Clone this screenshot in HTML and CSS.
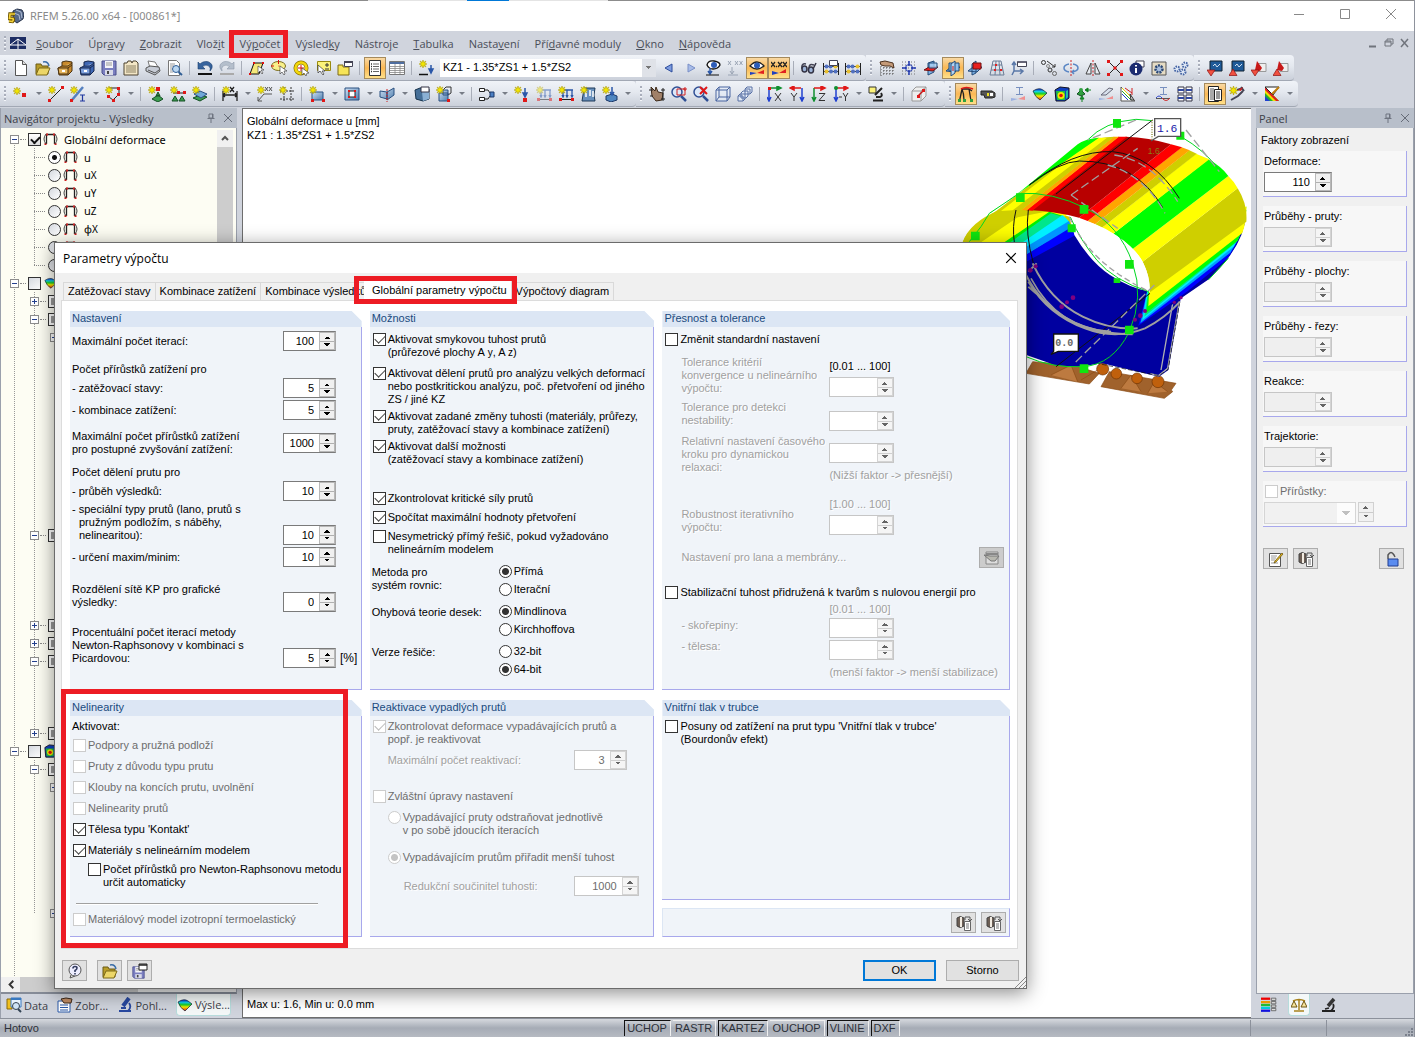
FILE: index.html
```html
<!DOCTYPE html>
<html lang="cs">

<head>
    <meta charset="UTF-8">
    <meta name="viewport" content="width=device-width, initial-scale=1.0">
    <title>RFEM 5.26.00 x64 - [000861*]</title>
    <link rel="stylesheet" href="styles.css">
</head>

<body>

    <!-- Icons -->
    <svg class="sprite" width="0" height="0">
        <defs>
            <linearGradient id="rainbow" x1="0" x2="0" y1="0" y2="1">
                <stop offset="0" stop-color="#1020d0"/><stop offset=".25" stop-color="#10d0e0"/><stop offset=".45" stop-color="#20d020"/><stop offset=".65" stop-color="#f5f000"/><stop offset="1" stop-color="#f01010"/>
            </linearGradient>
            <linearGradient id="blueface" x1="0" x2="1" y1="0" y2="1">
                <stop offset="0" stop-color="#cfe0f4"/><stop offset="1" stop-color="#4f7fae"/>
            </linearGradient>
        </defs>
        <symbol id="star" viewBox="0 0 8 8"><path d="M4 0l.8 2.3L7 1 5.700 3.200 8 4l-2.300.8L7 7 4.800 5.700 4 8l-.8-2.300L1 7l1.300-2.200L0 4l2.300-.8L1 1l2.200 1.300z" fill="#f2e600" stroke="#a89400" stroke-width=".5"/></symbol>
        <symbol id="i-app" viewBox="0 0 16 16"><path d="M5 3l4-2 5 1 2 4-1 5-6 4-4-3z" fill="#55688a" stroke="#26324a"/><path d="M8 2l5 2 1 6M6 5l5 2 1 5" stroke="#aebbd3" fill="none"/><path d="M7 6H2L1.500 10.500H5Q6 12 4.500 13.500L1 13" fill="none" stroke="#6b5200" stroke-width="3.500"/><path d="M7 6H2L1.500 10.500H5Q6 12 4.500 13.500L1 13" fill="none" stroke="#f5d33a" stroke-width="1.700"/></symbol>
        <symbol id="i-bridge" viewBox="0 0 16 12"><path fill="#1d2d63" d="M0 0h16v12H0z"/><path d="M0 8h16M8 2v10M0 8l8-6 8 6" stroke="#fff" fill="none"/></symbol>
        <symbol id="i-new" viewBox="0 0 16 16"><path d="M2.500.5h7l4 4v11h-11z" fill="#fff" stroke="#555"/><path d="M9.500.5v4h4" fill="#ddd" stroke="#555"/></symbol>
        <symbol id="i-open" viewBox="0 0 16 16"><path d="M1 4h5l1 2h6v8H1z" fill="#b89c28" stroke="#6b5a14"/><path d="M4 8h11l-3 7H1z" fill="#ecd668" stroke="#7d6a18"/><path d="M8 2q5-1 6 4" stroke="#3a6ea8" stroke-width="1.500" fill="none"/></symbol>
        <symbol id="i-chest" viewBox="0 0 16 16"><path d="M1 8l4-2V2l4-1 6 1v9l-4 4H2z" fill="#c98a2c" stroke="#4a3210"/><path d="M1 8h10v6H2zM11 8l4-3M5 6h6l4-3" fill="#e5b45c" stroke="#4a3210"/><path d="M5 10h3v2H5z" fill="#fff"/></symbol>
        <symbol id="i-chestb" viewBox="0 0 16 16"><path d="M1 8l4-2V2l4-1 6 1v9l-4 4H2z" fill="#3f67b4" stroke="#16264c"/><path d="M1 8h10v6H2zM11 8l4-3M5 6h6l4-3" fill="#7fa2de" stroke="#16264c"/><path d="M5 10h3v2H5z" fill="#fff"/></symbol>
        <symbol id="i-save" viewBox="0 0 16 16"><path d="M1 1h14v14H3l-2-2z" fill="#7b7fc0" stroke="#4a4e8c"/><path d="M4 1h8v7H4z" fill="#f4f4f8"/><path d="M5 3h6M5 5h6" stroke="#999"/><path d="M4 10h8v5H4z" fill="#d8dae8"/><path d="M6 11h2v3H6z" fill="#444"/></symbol>
        <symbol id="i-box" viewBox="0 0 16 16"><path d="M1 3h3l1-2h3l1 2 1-2h3l2 2v12H1z" fill="#f3e6c6" stroke="#4c4230"/><path d="M3 6h10M3 8h10M3 10h10M3 12h10" stroke="#8b8062"/></symbol>
        <symbol id="i-print" viewBox="0 0 16 16"><path d="M3 1l7 1 3 5-8 1z" fill="#fff" stroke="#777"/><path d="M1 8l4-2 9 1 1 4-5 4-9-4z" fill="#c7ccd6" stroke="#555"/><path d="M3 10l7 3 4-3" stroke="#555" fill="none"/></symbol>
        <symbol id="i-preview" viewBox="0 0 16 16"><path d="M1.500.5h8l3 3v12h-11z" fill="#fff" stroke="#777"/><path d="M3 4h5M3 6h4M3 8h2M3 10h2M3 12h3" stroke="#999"/><circle cx="9" cy="9" r="3.500" fill="#bcd8f2" stroke="#2f5d94"/><path d="M11.500 12l3.500 3" stroke="#2f5d94" stroke-width="2"/></symbol>
        <symbol id="i-undo" viewBox="0 0 16 16"><path d="M1 2v7h7L5.500 6.500Q9 4 12 6q2 2 1 5 3-3 2-6Q12 0 6 2 4 3 3 4z" fill="#37649e" stroke="#1b3f70" stroke-width=".6"/><path d="M1 14h14" stroke="#111" stroke-width="2"/></symbol>
        <symbol id="i-redo" viewBox="0 0 16 16"><path d="M15 2v7H8l2.500-2.500Q7 4 4 6 2 8 3 11 0 8 1 5q3-5 9-3 2 1 3 2z" fill="#b5bfcc" stroke="#8d99aa" stroke-width=".6"/><path d="M1 14h14" stroke="#aaa" stroke-width="2"/></symbol>
        <symbol id="i-poly" viewBox="0 0 16 16"><path d="M5 3h9l-4 11H1z" fill="#f5e87a" stroke="#111"/><path d="M4 2h2v2H4zM13 2h2v2h-2zM0 13h2v2H0z" fill="#e01010"/><path d="M9 6v7l2-2 2 3 1-1-2-3h3z" fill="#fff" stroke="#333" stroke-width=".6"/></symbol>
        <symbol id="i-lasso" viewBox="0 0 16 16"><ellipse cx="7.500" cy="6" rx="7" ry="4.500" fill="#f8f08a" stroke="#7b6c20"/><path d="M7.500 0v4M0 6h3M7.500 6h1" stroke="#e01010"/><path d="M9 6v8l2-2 2 3 1-1-1-3h3z" fill="#fff" stroke="#333" stroke-width=".6"/></symbol>
        <symbol id="i-ring" viewBox="0 0 16 16"><circle cx="8" cy="8" r="5.500" fill="#fff" stroke="#8b7400" stroke-width="4"/><circle cx="8" cy="8" r="5.500" fill="none" stroke="#f4d80c" stroke-width="2.600"/><path d="M5 8h6M8 5v6" stroke="#e01010"/><path d="M9 8v7l2-2 2 3 1-3h2z" fill="#fff" stroke="#333" stroke-width=".6"/></symbol>
        <symbol id="i-rectsel" viewBox="0 0 16 16"><path d="M2.500 1.500h13v9h-13z" fill="#fbf27a" stroke="#998a10"/><path d="M10 5h4M12 3v4M10 9h4" stroke="#333"/><path d="M3 5v8l2-2 3 4 1-1-2-3h3z" fill="#fff" stroke="#333" stroke-width=".7"/></symbol>
        <symbol id="i-foldwin" viewBox="0 0 16 16"><path d="M1 5h5v2h6v8H1z" fill="#f6e458" stroke="#7d6a18"/><path d="M7.500 1.500h8v5h-8z" fill="#fff" stroke="#445"/><path d="M7 2h9" stroke="#445" stroke-width="2"/></symbol>
        <symbol id="i-list" viewBox="0 0 16 16"><path d="M2.500.5h11v15h-11z" fill="#fff" stroke="#333"/><path d="M4 4h1M4 6.500h1M4 9h1M4 11.500h1" stroke="#333" stroke-width="1.500"/><path d="M6 4h6M6 6.500h6M6 9h6M6 11.500h6" stroke="#666"/></symbol>
        <symbol id="i-table" viewBox="0 0 16 16"><path d="M.5 1.500h15v13H.5z" fill="#fff" stroke="#777"/><path d="M1 3h14" stroke="#4f6ea0" stroke-width="2"/><path d="M1 6.500h14M1 8.500h14M1 10.500h14M1 12.500h14M6 4v10M11 4v10" stroke="#888" stroke-width=".8"/></symbol>
        <symbol id="i-load" viewBox="0 0 16 16"><use href="#star" width="8" height="8"/><path d="M12 5v7M10 9l2 4 2-4z" stroke="#2a57a8" stroke-width="1.500" fill="#2a57a8"/><path d="M0 14.500h9" stroke="#111" stroke-width="1.500"/></symbol>
        <symbol id="i-left" viewBox="0 0 16 16"><path d="M11 4v8L4 8z" fill="#7d9ce0" stroke="#2c4c9c"/></symbol>
        <symbol id="i-right" viewBox="0 0 16 16"><path d="M5 4v8l7-4z" fill="#a8bce8" stroke="#7a90c8"/></symbol>
        <symbol id="i-eyeload" viewBox="0 0 16 16"><path d="M2 5q1-5 7-4 6 1 6 4-2 4-7 4-4 0-6-4z" fill="#fff" stroke="#111" stroke-width="1.300"/><circle cx="9" cy="5" r="3" fill="#2c5cb8"/><path d="M5 8v6M3 11l2 3 2-3" stroke="#2a57a8" stroke-width="1.500" fill="none"/><path d="M1 15h13" stroke="#111"/></symbol>
        <symbol id="i-xxx" viewBox="0 0 16 16"><path d="M1 1l3 4M4 1L1 5M8 1l3 4M11 1L8 5M12.500 1l3 4M15.500 1l-3 4M5 7v7M3 11l2 3 2-3M1 15h10" stroke="#9aa4b4" fill="none"/></symbol>
        <symbol id="i-eye" viewBox="0 0 16 16"><path d="M1 6q7-8 14 0-7 6-14 0z" fill="#fff" stroke="#222" stroke-width="1.300"/><circle cx="8" cy="5.500" r="3" fill="#2c5cb8"/><path d="M1 15v-3l7 1z" fill="#2040c0"/><path d="M8 13l7-3v4z" fill="#e02020"/></symbol>
        <symbol id="i-xval" viewBox="0 0 16 16"><path d="M0 2l4 5M4 2L0 7M7 2l4 5M11 2L7 7M12 2l4 5M16 2l-4 5M5 6.500h1" stroke="#222" stroke-width="1.300"/><path d="M1 15v-4l7 2z" fill="#2040c0"/><path d="M8 13l7-4v4z" fill="#e02020"/></symbol>
        <symbol id="i-glasses" viewBox="0 0 16 16"><path d="M1 9q-1-6 4-5M8 8q0-5 5-3" fill="none" stroke="#445" stroke-width="1.500"/><ellipse cx="3.500" cy="9" rx="2.500" ry="3" fill="#9db4d8" stroke="#334" stroke-width="1.500"/><ellipse cx="10" cy="10" rx="2.500" ry="3" fill="#9db4d8" stroke="#334" stroke-width="1.500"/><path d="M12 9l3-6" stroke="#334" stroke-width="1.500"/></symbol>
        <symbol id="i-abacus" viewBox="0 0 16 16"><path d="M.5 3v12M15.500 3v12M1 6.500h14M1 11.500h14" stroke="#222"/><circle cx="3.500" cy="6.500" r="2" fill="#5070c0"/><circle cx="7.500" cy="6.500" r="2" fill="#5070c0"/><circle cx="12.500" cy="6.500" r="2" fill="#e8c030"/><circle cx="3.500" cy="11.500" r="2" fill="#e8c030"/><circle cx="8" cy="11.500" r="2" fill="#5070c0"/><circle cx="12.500" cy="11.500" r="2" fill="#5070c0"/></symbol>
        <symbol id="i-abacuswin" viewBox="0 0 16 16"><use href="#i-abacus" width="16" height="16"/><path d="M6.500.5h8v5h-8z" fill="#fff" stroke="#445"/></symbol>
        <symbol id="i-handgrid" viewBox="0 0 16 16"><path d="M1 8h14M1 11h14M1 14h14M2 3v13M5 7v9M8 7v9M11 7v9M14 7v9" stroke="#555" stroke-dasharray="1 2"/><path d="M1 2l5-1 8 2 1 5-4-2H6L2 5z" fill="#c49a78" stroke="#4c3220"/></symbol>
        <symbol id="i-snap" viewBox="0 0 16 16"><path d="M1 2h14M1 5h14M1 8h14M1 11h14M1 14h14" stroke="#777" stroke-dasharray="1 2"/><circle cx="8" cy="8" r="3.500" fill="none" stroke="#2038b0"/><path d="M8 1v5M8 10v5M1 8h5M10 8h5" stroke="#2038b0" stroke-width="1.500"/></symbol>
        <symbol id="i-planexy" viewBox="0 0 16 16"><path d="M5 3l6-2v11l-6 3z" fill="#7fb4e8" stroke="#234a78"/><path d="M1 10l5-3h9l-5 4z" fill="#e82020" stroke="#701010"/><path d="M6 3h8v5H6z" fill="#a8d0f4" fill-opacity=".8" stroke="#234a78"/></symbol>
        <symbol id="i-planeyz" viewBox="0 0 16 16"><path d="M1 11l5-4h9l-5 5z" fill="#7fb4e8" stroke="#234a78"/><path d="M4 3h10v8H4z" fill="#8fc0ee" stroke="#234a78"/><path d="M6 4l4-3v12l-4 3z" fill="#b0d4f4" stroke="#234a78"/><path d="M8 6v5" stroke="#d01818"/></symbol>
        <symbol id="i-planexz" viewBox="0 0 16 16"><path d="M1 11l5-4h9l-5 5zM5 4l4-3v12l-4 2z" fill="#7fb4e8" stroke="#234a78"/><path d="M6 3h8v6H6z" fill="#e82020" stroke="#701010"/></symbol>
        <symbol id="i-mesh" viewBox="0 0 16 16"><path d="M4 1h8l3 14H1zM3 5h10M2 10h12M7 1L6 15M10 1l1 14" fill="none" stroke="#6a7c96"/><path d="M6 4h2v2H6zM11 9h2v2h-2zM5 9h2v2H5z" fill="#e02020"/></symbol>
        <symbol id="i-coordwin" viewBox="0 0 16 16"><path d="M3 3v8h8M3 11l-2 4M1 5l2-3 2 3M9 9l3 2-3 3" fill="none" stroke="#5a78a8" stroke-width="1.500"/><path d="M6.500 1.500h9v5h-9z" fill="#fff" stroke="#445"/><path d="M7 2h8" stroke="#667" stroke-width="2"/></symbol>
        <symbol id="i-move" viewBox="0 0 16 16"><circle cx="2.500" cy="2.500" r="2" fill="none" stroke="#333"/><circle cx="7" cy="6" r="1.500" fill="none" stroke="#888"/><circle cx="9" cy="10" r="2" fill="none" stroke="#333"/><circle cx="13.500" cy="13.500" r="2" fill="none" stroke="#666"/><path d="M6 1l8 6M11 7h3V4" stroke="#333" fill="none"/></symbol>
        <symbol id="i-rotate" viewBox="0 0 16 16"><path d="M6 4Q1 5 1 8t5 4M10 4q5 1 5 4t-6 4M11 10l-2 2 2 2" fill="none" stroke="#5a86c4" stroke-width="1.500"/><path d="M8 0v16" stroke="#d02020" stroke-dasharray="2 1.500"/></symbol>
        <symbol id="i-mirror" viewBox="0 0 16 16"><path d="M6 3v11H1zM10 3v11h5z" fill="#e8ecf2" stroke="#444"/><path d="M8 0v16" stroke="#d02020" stroke-dasharray="2 1.500"/></symbol>
        <symbol id="i-cross" viewBox="0 0 16 16"><path d="M2 2l12 12M14 2L2 14" stroke="#222"/><path d="M0 0h3v3H0zM13 0h3v3h-3zM0 13h3v3H0zM13 13h3v3h-3zM6.500 6.500h3v3h-3z" fill="#e01818"/></symbol>
        <symbol id="i-info" viewBox="0 0 16 16"><path d="M7 1h8v6H7z" fill="#fff" stroke="#445"/><circle cx="7" cy="9" r="6.500" fill="#1c2c70"/><path d="M7 5v1.500M7 8v5" stroke="#fff" stroke-width="2"/></symbol>
        <symbol id="i-gearbox" viewBox="0 0 16 16"><path d="M1 2h14v13H1z" fill="#e6dcc4" stroke="#555"/><circle cx="8" cy="9" r="3.500" fill="#a9bedc" stroke="#2c4874" stroke-width="2.500" stroke-dasharray="2 1"/></symbol>
        <symbol id="i-gears" viewBox="0 0 16 16"><g fill="#dfe8f6" stroke="#4464a4" stroke-width="2" stroke-dasharray="1.500 1"><circle cx="4" cy="9" r="2.500"/><circle cx="12" cy="5" r="2.500"/><circle cx="10" cy="12" r="2.500"/></g></symbol>
        <symbol id="i-scrdown" viewBox="0 0 16 16"><path d="M3 1h12v10H3z" fill="#1e5a98" stroke="#123"/><path d="M6 6l2-2 2 3 3-3" stroke="#cde" fill="none"/><path d="M0 10h8l-4 6z" fill="#f05040" stroke="#8c1010" stroke-width=".7"/></symbol>
        <symbol id="i-scrup" viewBox="0 0 16 16"><path d="M3 1h12v10H3z" fill="#1e5a98" stroke="#123"/><path d="M6 6l2-2 2 3 3-3" stroke="#cde" fill="none"/><path d="M0 15.500h8L4 9z" fill="#f05040" stroke="#8c1010" stroke-width=".7"/></symbol>
        <symbol id="i-pdfdown" viewBox="0 0 16 16"><path d="M7 3.500h8v8H7z" fill="#eee" stroke="#999"/><path d="M4 10l2-9 5 7-2 3z" fill="#c81818"/><path d="M0 10h8l-4 6z" fill="#f05040" stroke="#8c1010" stroke-width=".7"/></symbol>
        <symbol id="i-pdfup" viewBox="0 0 16 16"><path d="M7 3.500h8v8H7z" fill="#eee" stroke="#999"/><path d="M4 10l2-9 5 7-2 3z" fill="#c81818"/><path d="M0 15.500h8L4 9z" fill="#f05040" stroke="#8c1010" stroke-width=".7"/></symbol>
        <symbol id="i-node" viewBox="0 0 16 16"><use href="#star" width="8" height="8" y="1"/><path d="M9 7h4v4H9z" fill="#e01818"/></symbol>
        <symbol id="i-line" viewBox="0 0 16 16"><use href="#star" width="8" height="8"/><path d="M2 14L14 2" stroke="#222"/><path d="M0 13h3v3H0zM13 0h3v3h-3z" fill="#e01818"/></symbol>
        <symbol id="i-member" viewBox="0 0 16 16"><path d="M2 14L13 1" stroke="#5580c0" stroke-width="2.500"/><path d="M0 13h3v3H0z" fill="#e01818"/><path d="M10 9h5M10 15h5M12.500 9v6" stroke="#2038a0" stroke-width="1.200"/><use href="#star" width="8" height="8"/></symbol>
        <symbol id="i-polyline" viewBox="0 0 16 16"><path d="M4 2h10v6L8 14l-4-3" fill="none" stroke="#222"/><path d="M12 1h3v3h-3zM12 7h3v3h-3zM7 13h3v3H7zM2 9h3v3H2z" fill="#e01818"/><use href="#star" width="8" height="8"/></symbol>
        <symbol id="i-support" viewBox="0 0 16 16"><path d="M8 1h4v4H8z" fill="#e01818"/><path d="M10 6l2 4H8zM4 13l6-4 5 4-5 3z" fill="#3c9c50" stroke="#145024"/><use href="#star" width="8" height="8"/></symbol>
        <symbol id="i-linesup" viewBox="0 0 16 16"><path d="M3 7h11" stroke="#222"/><path d="M7 5h3v3H7zM13 5h3v3h-3z" fill="#e01818"/><path d="M5 10l3 5H2zM12 10l3 5H9z" fill="#3c9c50" stroke="#145024"/><use href="#star" width="8" height="8"/></symbol>
        <symbol id="i-surfsup" viewBox="0 0 16 16"><path d="M1 12l7-3 7 2-7 4z" fill="#3c9c50" stroke="#145024"/><path d="M2 8l6-3 7 3-6 4z" fill="#70a8d8" stroke="#2a5080"/><use href="#star" width="8" height="8"/></symbol>
        <symbol id="i-dim" viewBox="0 0 16 16"><path d="M1 5v10M15 5v10M1 9h14M3 7L1 9l2 2M13 7l2 2-2 2M8 1l4 5M12 1L8 6" stroke="#222" fill="none" stroke-width="1.300"/><use href="#star" width="8" height="8"/></symbol>
        <symbol id="i-note" viewBox="0 0 16 16"><path d="M8 1l3 4M11 1L8 5M12 1l3 4M15 1l-3 4M7 8h8M7 8l-6 7M1 11v4h4" stroke="#555" fill="none"/><use href="#star" width="8" height="8"/></symbol>
        <symbol id="i-guides" viewBox="0 0 16 16"><path d="M5 1v14M12 1v14M1 5h14M1 13h14" stroke="#333" stroke-dasharray="2 1"/><use href="#star" width="8" height="8"/></symbol>
        <symbol id="i-surface" viewBox="0 0 16 16"><path d="M3 6h11v8H3z" fill="url(#blueface)" stroke="#2a5080"/><path d="M13 13h3v3h-3zM2 13h3v3H2z" fill="#e01818"/><use href="#star" width="8" height="8"/></symbol>
        <symbol id="i-opening" viewBox="0 0 16 16"><path d="M1 2h14v12H1z" fill="url(#blueface)" stroke="#2a5080"/><path d="M5 5h6v6H5z" fill="#fff" stroke="#222"/><path d="M4 4h2v2H4zM10 4h2v2h-2zM4 10h2v2H4zM10 10h2v2h-2z" fill="#e01818"/></symbol>
        <symbol id="i-joint" viewBox="0 0 16 16"><path d="M1 5l7 1v7l-7-2zM8 6l7-4v7l-7 5z" fill="url(#blueface)" stroke="#2a5080"/><path d="M8 3v13" stroke="#d02020" stroke-dasharray="2 1"/></symbol>
        <symbol id="i-solid" viewBox="0 0 16 16"><path d="M1 4l5-2 9 1v10l-6 2-7-2z" fill="#456f98" stroke="#16324c"/><path d="M8 6l7-2v9l-6 2z" fill="#8ab0d4"/><path d="M7 1h8v5H7z" fill="#fff" stroke="#334"/></symbol>
        <symbol id="i-solidnew" viewBox="0 0 16 16"><path d="M7 4l3-3h5v6l-3 2" fill="none" stroke="#333"/><path d="M3 7h9v8H3zM7 4h5v5H7z" fill="url(#blueface)" stroke="#2a5080"/><path d="M11 13h3v3h-3z" fill="#e01818"/><use href="#star" width="8" height="8"/></symbol>
        <symbol id="i-release" viewBox="0 0 16 16"><path d="M.5 2.500h5v3h-5zM.5 11.500h5v3h-5z" fill="#fff" stroke="#222"/><path d="M6 4h3l2 3M6 13h3l2-3" stroke="#222" fill="none"/><path d="M11 6h4v5h-4z" fill="#4c80c4" stroke="#1c3868"/></symbol>
        <symbol id="i-nodeload" viewBox="0 0 16 16"><path d="M11 2v8M9 7l2 4 2-4z" stroke="#2a57a8" stroke-width="1.500" fill="#2a57a8"/><path d="M9 12h4v4H9z" fill="#e01818"/><use href="#star" width="8" height="8"/></symbol>
        <symbol id="i-memload" viewBox="0 0 16 16"><path d="M4 4h11M5 4v7M9 4v7M14 4v7M4 9l1 2 1-2M8 9l1 2 1-2M13 9l1 2 1-2" stroke="#2a57a8" fill="none" stroke-width="1.300"/><path d="M2 13.500h13" stroke="#222"/><path d="M1 12h3v3H1zM13 12h3v3h-3z" fill="#e01818"/><use href="#star" width="8" height="8"/></symbol>
        <symbol id="i-surfload" viewBox="0 0 16 16"><path d="M4 2h11l-1 7 1 6H2l1-6z" fill="#6890bc" stroke="#1c3858"/><path d="M6 5v6M10 4v6M13 5v6" stroke="#fff" stroke-width="1.500"/><use href="#star" width="8" height="8"/></symbol>
        <symbol id="i-solidload" viewBox="0 0 16 16"><path d="M4 10l6-2 5 2v4l-6 2-5-2z" fill="#4f86c0" stroke="#1c3868"/><path d="M10 1v8M8 6l2 3 2-3" stroke="#2a57a8" fill="none" stroke-width="1.500"/><use href="#star" width="8" height="8"/></symbol>
        <symbol id="i-hand" viewBox="0 0 16 16"><path d="M2 1l4 4 1-4 2 5 5 1-1 7-6 1-4-5z" fill="#a08068" stroke="#3c2818"/><path d="M0 4h4M12 4h4M1 10h3M12 13h4M14 2v13" stroke="#222"/></symbol>
        <symbol id="i-zoomwin" viewBox="0 0 16 16"><circle cx="6" cy="6" r="5" fill="#dce8f8" stroke="#2f4f94" stroke-width="1.500"/><path d="M10 10l5 5" stroke="#2f4f94" stroke-width="2.500"/><path d="M6 3h8v6H6zM14 1v4M12 3h4" fill="none" stroke="#d02020"/></symbol>
        <symbol id="i-zoomall" viewBox="0 0 16 16"><circle cx="6" cy="6" r="5" fill="#dce8f8" stroke="#2f4f94" stroke-width="1.500"/><path d="M10 10l5 5" stroke="#2f4f94" stroke-width="2.500"/><path d="M7 1l7 7M14 1L7 8" stroke="#e01818" stroke-width="2"/></symbol>
        <symbol id="i-cube" viewBox="0 0 16 16"><path d="M1 4l3-3h11v10l-3 4H1zM1 4h11v11M12 4l3-3M4 1v10h11M4 11l-3 4" fill="#e4ecf8" fill-opacity=".6" stroke="#4864a0"/></symbol>
        <symbol id="i-cubes" viewBox="0 0 16 16"><path d="M8 3l2-2h5v5l-2 2H8zM8 3h5v5M4 7l2-2h5v5l-2 2H4zM1 10l2-2h5v5l-2 2H1zM1 10h5v5" fill="#e4ecf8" stroke="#5870a4"/></symbol>
        <symbol id="i-axx" viewBox="0 0 16 16"><path d="M2 2v12M0 11l2 4 2-4" stroke="#2040d0" stroke-width="1.500" fill="none"/><path d="M3 2h9M10 0l4 2-4 2z" stroke="#109030" stroke-width="1.500" fill="#109030"/><path d="M1 1h3v3H1z" fill="#e01818"/><path d="M8 7l6 8M14 7l-6 8" stroke="#333"/></symbol>
        <symbol id="i-axy" viewBox="0 0 16 16"><path d="M13 2v12M11 11l2 4 2-4" stroke="#2040d0" stroke-width="1.500" fill="none"/><path d="M12 2H3M5 0L1 2l4 2z" stroke="#e01818" stroke-width="1.500" fill="#e01818"/><path d="M2 7l3 4 3-4M5 11v4" stroke="#333" fill="none"/></symbol>
        <symbol id="i-axz" viewBox="0 0 16 16"><path d="M3 2v12M1 11l2 4 2-4" stroke="#109030" stroke-width="1.500" fill="none"/><path d="M3 2h9M10 0l4 2-4 2z" stroke="#e01818" stroke-width="1.500" fill="#e01818"/><path d="M8 7.500h6l-6 7h6" stroke="#333" fill="none"/></symbol>
        <symbol id="i-axyn" viewBox="0 0 16 16"><path d="M3 2v12M1 11l2 4 2-4" stroke="#2040d0" stroke-width="1.500" fill="none"/><path d="M3 2h10M11 0l4 2-4 2z" stroke="#e01818" stroke-width="1.500" fill="#e01818"/><circle cx="3" cy="2" r="2" fill="#109030"/><path d="M6 11h3M10 7l2.500 4L15 7M12.500 11v4" stroke="#333" fill="none"/></symbol>
        <symbol id="i-scope" viewBox="0 0 16 16"><path d="M1 1h7v6H1z" fill="#fbf27a" stroke="#333"/><path d="M14 2L7 9M5 14.500h10M8 11h4q3-1 1-4" stroke="#222" stroke-width="2" fill="none"/></symbol>
        <symbol id="i-clip" viewBox="0 0 16 16"><path d="M1 5l4-4h10v9l-5 5H1zM1 5h9v10M10 5l5-4" fill="#eee" stroke="#999"/><path d="M7 10l5-5" stroke="#c01818" stroke-width="1.500"/><path d="M6 9h3v3H6zM11 3h3v3h-3z" fill="#e01818"/></symbol>
        <symbol id="i-frame" viewBox="0 0 16 16"><path d="M1.500 15L4 3h7l2 12M4 3q2 5 2 11M11 3l3 2" fill="none" stroke="#222" stroke-width="1.300"/><path d="M3 3q5-3 12 0" stroke="#e01818" fill="none" stroke-width="1.500"/><path d="M0 13h3v3H0zM5 13h3v3H5zM12 13h3v3h-3z" fill="#30a040"/></symbol>
        <symbol id="i-battery" viewBox="0 0 16 16"><path d="M1 5h11l3 2v4l-3 1H5L4 9H1z" fill="#555" stroke="#222"/><path d="M7 7h2v3H7z" fill="#f0e020"/><path d="M10 7h3v3h-3z" fill="#fff"/></symbol>
        <symbol id="i-ibeam" viewBox="0 0 16 16"><path d="M6 1.500h7M6 8.500h7M9.500 1v7" stroke="#7890c0"/><path d="M1 15v-3l7 1z" fill="#9cb0e0"/><path d="M8 13l7-3v4z" fill="#f09090"/></symbol>
        <symbol id="i-iwave" viewBox="0 0 16 16"><path d="M5 1.500h7M5 8.500h7M8.500 1v7" stroke="#7890c0"/><path d="M1 12.500h14" stroke="#555"/><path d="M1 12q3-4 6 0" fill="none" stroke="#3048d0"/><path d="M7 12q4 5 8 0" fill="none" stroke="#d03030"/></symbol>
        <symbol id="i-rainbow" viewBox="0 0 16 16"><path d="M1 5q6-4 10-1l4 3-7 7q-5-3-7-9z" fill="url(#rainbow)" stroke="#123" stroke-width=".7"/></symbol>
        <symbol id="i-raincube" viewBox="0 0 16 16"><path d="M1 4l5-3 9 1v10l-4 3H2z" fill="#1040c0" stroke="#112"/><path d="M2 5h9v9H3z" fill="#20c040"/><circle cx="7" cy="9.500" r="3.500" fill="#f5e800"/><circle cx="7" cy="9.500" r="1.800" fill="#e01010"/><path d="M12 5l2-1v7l-2 2z" fill="#20c0a0"/></symbol>
        <symbol id="i-react" viewBox="0 0 16 16"><path d="M1 8l4-4 4 4-4 2z" fill="#30a040" stroke="#145024"/><circle cx="5" cy="4" r="2" fill="#30a040"/><path d="M15 4h-5M12 2l-3 2 3 2z" stroke="#108020" fill="#108020"/><path d="M6 16v-4M4 13l2-3 2 3z" stroke="#108020" fill="#20a040"/></symbol>
        <symbol id="i-planes" viewBox="0 0 16 16"><path d="M3 9l8-7 4 1-7 6z" fill="#d8e0ec" stroke="#667"/><path d="M1 14v-2l7 1z" fill="#9cb0e0"/><path d="M8 13l7-3v3z" fill="#f09090"/></symbol>
        <symbol id="i-diag" viewBox="0 0 16 16"><path d="M1 1v14h14z" fill="#fff" stroke="#555"/><path d="M2 5l9 9" stroke="#20a030"/><path d="M2 8l6 6" stroke="#2040d0"/><path d="M2 2l12 12" stroke="#e8d000"/><path d="M5 2l7 5M12 2v7" stroke="#d02020" fill="none"/><path d="M10 8l4 6h-3z" fill="#ddd" stroke="#333"/></symbol>
        <symbol id="i-sections" viewBox="0 0 16 16"><path d="M1 1h6v6H1zM9 1h6v6H9zM1 9h6v6H1zM9 9h6v6H9z" fill="#fff" stroke="#334"/><path d="M1 4h6M9 4h6M1 12h6M9 12h6" stroke="#3048a0" stroke-width="2"/></symbol>
        <symbol id="i-panel" viewBox="0 0 16 16"><path d="M1.500.5h10v15h-10z" fill="#fff" stroke="#222"/><path d="M3 3h4M3 5h4M3 7h4M3 9h4M3 11h4M3 13h4" stroke="#555"/><path d="M7.500 3.500h7v11h-7z" fill="#fff" stroke="#222"/><path d="M9 6h4M9 8h4M9 10h4M9 12h4" stroke="#333"/></symbol>
        <symbol id="i-wizard" viewBox="0 0 16 16"><path d="M2 14l7-4 5-5M8 4l6-2M12 1l3 4" stroke="#445" stroke-width="2" fill="none"/><path d="M9 4l5-3-2 4z" fill="#d02020"/><use href="#star" width="9" height="9"/></symbol>
        <symbol id="i-colors" viewBox="0 0 16 16"><path d="M1 1v14h14z" fill="#2040d0"/><path d="M1 1v9l5 5h9z" fill="#20b030"/><path d="M1 1v6l8 8h6z" fill="#f0e000"/><path d="M1 1v3l11 11h3z" fill="#e02020"/><path d="M1 1h14l-6 8z" fill="#fff" stroke="#222"/><path d="M15 1L8 8" stroke="#c08010" stroke-width="2"/></symbol>
        <symbol id="i-def" viewBox="0 0 16 14"><path d="M3.500 12V2.500h8V12" fill="none" stroke="#222" stroke-width="1.300"/><path d="M3 2.500h2M10 2.500h2M2.500 11v2M12.500 11v2" stroke="#d02020" stroke-width="2"/><path d="M3 2Q-1 7 3 12M12 2q4 5 0 10" fill="none" stroke="#444"/></symbol>
        <symbol id="i-datatab" viewBox="0 0 16 16"><path d="M1 2h5v10H1z" fill="#f0c020" stroke="#8a6a08"/><path d="M5 1h10v9H5z" fill="#e8f4ff" stroke="#3878c0"/><path d="M5 2h10" stroke="#3878c0" stroke-width="2"/><circle cx="10" cy="9" r="3.500" fill="#cfe4f6" stroke="#345"/><path d="M12 12l3 3" stroke="#345" stroke-width="2"/></symbol>
        <symbol id="i-proptab" viewBox="0 0 16 16"><path d="M1 4h12v11H1z" fill="#fff" stroke="#2858a8"/><path d="M3 8h8M3 10.500h8M3 13h8" stroke="#2858a8"/><path d="M4 2l5-1 6 1-1 4H7z" fill="#c08c64" stroke="#3c2818"/></symbol>
        <symbol id="i-micro" viewBox="0 0 16 16"><path d="M12 1L6 9" stroke="#2848a0" stroke-width="4"/><path d="M2 14h12M12 6q3 4-1 8M4 11h5" stroke="#2848a0" stroke-width="1.800" fill="none"/></symbol>
        <symbol id="i-microd" viewBox="0 0 16 16"><path d="M13 2L7 9" stroke="#333" stroke-width="3.500"/><path d="M1 14h13M12 7q2 3-2 7M4 12l4-1" stroke="#222" stroke-width="1.800" fill="none"/></symbol>
        <symbol id="i-scale" viewBox="0 0 16 16"><path d="M8 2v11M2 4q6-3 12 0M3 14h10" stroke="#a8821c" stroke-width="1.500" fill="none"/><path d="M3 4l-3 6h6zM13 4l-3 6h6z" fill="#f6e49c" stroke="#6c5410"/></symbol>
        <symbol id="i-legend" viewBox="0 0 14 14"><path d="M0 1.500h8" stroke="#e00" stroke-width="2"/><path d="M0 4.500h8" stroke="#e90" stroke-width="2"/><path d="M0 7h8" stroke="#2b3" stroke-width="2"/><path d="M0 9.500h8" stroke="#0cd" stroke-width="2"/><path d="M0 12h8" stroke="#11d" stroke-width="2"/><path d="M9 1h4v2H9zM9 4h4v2H9zM9 7h4v2H9zM9 10h4v2H9z" fill="#ddd" stroke="#555" stroke-width=".7"/></symbol>
        <symbol id="i-help" viewBox="0 0 16 16"><path d="M4 12l-1 3 5-2" fill="#eee" stroke="#555"/><circle cx="8" cy="7" r="6" fill="#eef" stroke="#555"/><path d="M6 5.500q0-2 2-2t2 1.500-2 2.500v1.500M8 10v1.500" fill="none" stroke="#333c60" stroke-width="1.600"/></symbol>
        <symbol id="i-savewin" viewBox="0 0 16 16"><use href="#i-save" y="3" width="13" height="13"/><path d="M7 1h8v6H7z" fill="#fff" stroke="#222"/><path d="M7 2h8" stroke="#222" stroke-width="1.500"/></symbol>
        <symbol id="i-std" viewBox="0 0 16 16"><path d="M1 3q3-3 7 0v8q-4 3-7 0z" fill="#6d5f55" stroke="#444"/><path d="M4 2h2v10H4z" fill="#f2ece2"/><path d="M9 5V2h5v3M12 4l2 2 2-2" fill="none" stroke="#555"/><path d="M8.500 6.500h6v9h-6z" fill="#fff" stroke="#666"/><path d="M10 9h3M10 11h3M10 13h3" stroke="#777"/></symbol>
        <symbol id="i-edit" viewBox="0 0 16 16"><path d="M1.500 2.500h11v13h-11z" fill="#fff" stroke="#555"/><path d="M3 5h6M3 7h5M3 9h4M3 12h7" stroke="#999"/><path d="M15 3L8 11l-2 1 1-2 7-8z" fill="#f5c820" stroke="#6c5410" stroke-width=".8"/></symbol>
        <symbol id="i-lock" viewBox="0 0 16 16"><path d="M4 8V4q3-5 6 0l1 2" fill="none" stroke="#555" stroke-width="1.500"/><path d="M4 8h10v7H4z" fill="#5a8cf0" stroke="#203c90"/></symbol>
        <symbol id="i-cable" viewBox="0 0 16 16"><path d="M2 2h12v12H2z" fill="#ddd" stroke="#888"/><path d="M2 4h12" stroke="#888" stroke-width="2"/><path d="M0 5l6 1 9 0-4 5H7z" fill="#b8b8b0" stroke="#777"/></symbol>
        <symbol id="i-pin" viewBox="0 0 10 10"><path d="M3 1h4v4H3zM1.500 5.500h7M5 6v4M6.500 1v4" fill="none" stroke="#6e7480"/></symbol>
        <symbol id="i-x" viewBox="0 0 10 10"><path d="M1 1l8 8M9 1L1 9" fill="none" stroke="currentColor"/></symbol>
    </svg>

    <div class="app">

        <header class="titlebar">
            <svg class="icon"><use href="#i-app"/></svg>
            <span class="app-title">RFEM 5.26.00 x64 - [000861*]</span>
            <button class="win-btn" aria-label="Minimalizovat"><svg viewBox="0 0 10 10"><path d="M0 5.500h10" stroke="#888"/></svg></button>
            <button class="win-btn" aria-label="Maximalizovat"><svg viewBox="0 0 10 10"><path d="M.5.5h9v9h-9z" fill="none" stroke="#888"/></svg></button>
            <button class="win-btn" aria-label="Zavřít"><svg viewBox="0 0 10 10"><path d="M0 0l10 10M10 0L0 10" stroke="#888"/></svg></button>
        </header>

        <nav class="menubar">
            <span class="handle"></span>
            <svg class="bridge"><use href="#i-bridge"/></svg>
            <a href="#"><u>S</u>oubor</a>
            <a href="#">Úpr<u>a</u>vy</a>
            <a href="#"><u>Z</u>obrazit</a>
            <a href="#">Vlož<u>i</u>t</a>
            <a href="#" class="marked">Vý<u>p</u>očet</a>
            <a href="#">Výsled<u>k</u>y</a>
            <a href="#">Nástro<u>j</u>e</a>
            <a href="#"><u>T</u>abulka</a>
            <a href="#">Nasta<u>v</u>ení</a>
            <a href="#">Pří<u>d</u>avné moduly</a>
            <a href="#"><u>O</u>kno</a>
            <a href="#"><u>N</u>ápověda</a>
            <span class="mdi">
                <svg viewBox="0 0 10 10"><path d="M1 8.500h7" stroke="#70747c" stroke-width="2"/></svg>
                <svg viewBox="0 0 10 10"><path d="M3 3V1h6v5H7M1 3h6v5H1zM1 4h6" fill="none" stroke="#70747c"/></svg>
                <svg viewBox="0 0 10 10"><path d="M1 1l7 8M8 1L1 9" stroke="#70747c" stroke-width="1.500"/></svg>
            </span>
        </nav>

        <div class="toolbar">
            <div class="group">
                <span class="handle"></span>
                <button><svg><use href="#i-new"/></svg></button>
                <button><svg><use href="#i-open"/></svg></button>
                <button><svg><use href="#i-chest"/></svg></button>
                <button><svg><use href="#i-chestb"/></svg></button>
                <button><svg><use href="#i-save"/></svg></button>
                <button><svg><use href="#i-box"/></svg></button>
                <button><svg><use href="#i-print"/></svg></button>
                <button><svg><use href="#i-preview"/></svg></button>
                <i class="sep"></i>
                <button><svg><use href="#i-undo"/></svg></button>
                <button><svg><use href="#i-redo"/></svg></button>
                <i class="sep"></i>
                <button><svg><use href="#i-poly"/></svg></button>
                <button><svg><use href="#i-lasso"/></svg></button>
                <button><svg><use href="#i-ring"/></svg></button>
                <button><svg><use href="#i-rectsel"/></svg></button>
                <button><svg><use href="#i-foldwin"/></svg></button>
                <i class="sep"></i>
                <button class="on"><svg><use href="#i-list"/></svg></button>
                <button><svg><use href="#i-table"/></svg></button>
                <i class="sep"></i>
                <button><svg><use href="#i-load"/></svg></button>
                <span class="combo"><select aria-label="Zatěžovací stav"><option>KZ1 - 1.35*ZS1 + 1.5*ZS2</option></select></span>
                <button><svg><use href="#i-left"/></svg></button>
                <button><svg><use href="#i-right"/></svg></button>
                <button><svg><use href="#i-eyeload"/></svg></button>
                <button><svg><use href="#i-xxx"/></svg></button>
                <button class="on"><svg><use href="#i-eye"/></svg></button>
                <button class="on"><svg><use href="#i-xval"/></svg></button>
                <i class="sep"></i>
                <button><svg><use href="#i-glasses"/></svg></button>
                <button><svg><use href="#i-abacuswin"/></svg></button>
                <button><svg><use href="#i-abacus"/></svg></button>
            </div>
            <div class="group">
                <span class="handle"></span>
                <button><svg><use href="#i-handgrid"/></svg></button>
                <button><svg><use href="#i-snap"/></svg></button>
                <button><svg><use href="#i-planexy"/></svg></button>
                <button class="on"><svg><use href="#i-planeyz"/></svg></button>
                <button><svg><use href="#i-planexz"/></svg></button>
                <button><svg><use href="#i-mesh"/></svg></button>
                <button><svg><use href="#i-coordwin"/></svg></button>
                <i class="sep"></i>
                <button><svg><use href="#i-move"/></svg></button>
                <button><svg><use href="#i-rotate"/></svg></button>
                <button><svg><use href="#i-mirror"/></svg></button>
                <button><svg><use href="#i-cross"/></svg></button>
                <button><svg><use href="#i-info"/></svg></button>
                <button><svg><use href="#i-gearbox"/></svg></button>
                <button><svg><use href="#i-gears"/></svg></button>
            </div>
            <div class="group">
                <span class="handle"></span>
                <button><svg><use href="#i-scrdown"/></svg></button>
                <button><svg><use href="#i-scrup"/></svg></button>
                <button><svg><use href="#i-pdfdown"/></svg></button>
                <button><svg><use href="#i-pdfup"/></svg></button>
            </div>
        </div>

        <div class="toolbar">
            <div class="group">
                <span class="handle"></span>
                <button><svg><use href="#i-node"/></svg></button>
                <button class="drop"></button>
                <button><svg><use href="#i-line"/></svg></button>
                <button><svg><use href="#i-member"/></svg></button>
                <button class="drop"></button>
                <button><svg><use href="#i-polyline"/></svg></button>
                <button class="drop"></button>
                <i class="sep"></i>
                <button><svg><use href="#i-support"/></svg></button>
                <button><svg><use href="#i-linesup"/></svg></button>
                <button><svg><use href="#i-surfsup"/></svg></button>
                <i class="sep"></i>
                <button><svg><use href="#i-dim"/></svg></button>
                <button class="drop"></button>
                <button><svg><use href="#i-note"/></svg></button>
                <button><svg><use href="#i-guides"/></svg></button>
                <i class="sep"></i>
                <button><svg><use href="#i-surface"/></svg></button>
                <button class="drop"></button>
                <button><svg><use href="#i-opening"/></svg></button>
                <button class="drop"></button>
                <button><svg><use href="#i-joint"/></svg></button>
                <button class="drop"></button>
                <button><svg><use href="#i-solid"/></svg></button>
                <button><svg><use href="#i-solidnew"/></svg></button>
                <button class="drop"></button>
                <i class="sep"></i>
                <button><svg><use href="#i-release"/></svg></button>
                <button class="drop"></button>
                <button><svg><use href="#i-nodeload"/></svg></button>
                <button class="dim"><svg><use href="#i-memload"/></svg></button>
                <button><svg><use href="#i-memload"/></svg></button>
                <button><svg><use href="#i-surfload"/></svg></button>
                <button><svg><use href="#i-solidload"/></svg></button>
                <button class="drop"></button>
            </div>
            <div class="group">
                <span class="handle"></span>
                <button><svg><use href="#i-hand"/></svg></button>
                <button><svg><use href="#i-zoomwin"/></svg></button>
                <button><svg><use href="#i-zoomall"/></svg></button>
                <button><svg><use href="#i-cube"/></svg></button>
                <button><svg><use href="#i-cubes"/></svg></button>
                <i class="sep"></i>
                <button><svg><use href="#i-axx"/></svg></button>
                <button><svg><use href="#i-axy"/></svg></button>
                <button><svg><use href="#i-axz"/></svg></button>
                <button><svg><use href="#i-axyn"/></svg></button>
                <button class="drop"></button>
                <button><svg><use href="#i-scope"/></svg></button>
                <button class="drop"></button>
                <i class="sep"></i>
                <button><svg><use href="#i-clip"/></svg></button>
                <button class="drop"></button>
            </div>
            <div class="group">
                <span class="handle"></span>
                <button class="on"><svg><use href="#i-frame"/></svg></button>
                <button><svg><use href="#i-battery"/></svg></button>
                <i class="sep"></i>
                <button><svg><use href="#i-ibeam"/></svg></button>
                <button><svg><use href="#i-rainbow"/></svg></button>
                <button><svg><use href="#i-raincube"/></svg></button>
                <button><svg><use href="#i-react"/></svg></button>
                <button><svg><use href="#i-planes"/></svg></button>
                <button><svg><use href="#i-diag"/></svg></button>
                <button class="drop"></button>
                <button><svg><use href="#i-iwave"/></svg></button>
                <button><svg><use href="#i-sections"/></svg></button>
                <i class="sep"></i>
                <button class="on"><svg><use href="#i-panel"/></svg></button>
                <button><svg><use href="#i-wizard"/></svg></button>
                <button class="drop"></button>
                <button><svg><use href="#i-colors"/></svg></button>
                <button class="drop"></button>
            </div>
        </div>

        <main class="workspace">

            <!-- Navigator -->
            <aside class="navigator">
                <div class="pane-head">
                    <span>Navigátor projektu - Výsledky</span>
                    <svg><use href="#i-pin"/></svg>
                    <svg><use href="#i-x"/></svg>
                </div>
                <div class="tree-box">
                    <ul class="tree">
                        <li>
                            <div class="node"><b class="exp"></b><input type="checkbox" id="t-def" checked><svg><use href="#i-def"/></svg><label for="t-def">Globální deformace</label></div>
                            <ul>
                                <li><div class="node leaf"><input type="radio" name="def" id="t-u" checked><svg><use href="#i-def"/></svg><label for="t-u">u</label></div></li>
                                <li><div class="node leaf"><input type="radio" name="def" id="t-ux"><svg><use href="#i-def"/></svg><label for="t-ux">u<small>X</small></label></div></li>
                                <li><div class="node leaf"><input type="radio" name="def" id="t-uy"><svg><use href="#i-def"/></svg><label for="t-uy">u<small>Y</small></label></div></li>
                                <li><div class="node leaf"><input type="radio" name="def" id="t-uz"><svg><use href="#i-def"/></svg><label for="t-uz">u<small>Z</small></label></div></li>
                                <li><div class="node leaf"><input type="radio" name="def" id="t-px"><svg><use href="#i-def"/></svg><label for="t-px">φ<small>X</small></label></div></li>
                                <li><div class="node leaf"><input type="radio" name="def" aria-label="φY"><svg><use href="#i-def"/></svg></div></li>
                                <li><div class="node leaf"><input type="radio" name="def" aria-label="φZ"><svg><use href="#i-def"/></svg></div></li>
                            </ul>
                        </li>
                        <li>
                            <div class="node"><b class="exp"></b><input type="checkbox" aria-label="Plochy"><svg><use href="#i-rainbow"/></svg></div>
                            <ul>
                                <li><div class="node"><b class="exp plus"></b><input type="checkbox" class="part" aria-label="Skupina"></div></li>
                                <li>
                                    <div class="node"><b class="exp"></b><input type="checkbox" class="part" aria-label="Skupina"></div>
                                    <ul class="rows-11"><li><div class="node"><b class="exp"></b></div></li></ul>
                                </li>
                                <li>
                                    <div class="node"><b class="exp"></b><input type="checkbox" class="part" aria-label="Skupina"></div>
                                    <ul class="rows-4"><li><div class="node leaf"></div></li><li><div class="node leaf"></div></li><li><div class="node leaf"></div></li><li><div class="node leaf"></div></li></ul>
                                </li>
                                <li><div class="node"><b class="exp plus"></b><input type="checkbox" class="part" aria-label="Skupina"></div></li>
                                <li><div class="node"><b class="exp plus"></b><input type="checkbox" class="part" aria-label="Skupina"></div></li>
                                <li>
                                    <div class="node"><b class="exp"></b><input type="checkbox" class="part" aria-label="Skupina"></div>
                                    <ul class="rows-3"><li><div class="node leaf"></div></li></ul>
                                </li>
                                <li><div class="node"><b class="exp plus"></b><input type="checkbox" class="part" aria-label="Skupina"></div></li>
                            </ul>
                        </li>
                        <li>
                            <div class="node"><b class="exp"></b><input type="checkbox" aria-label="Tělesa"><svg><use href="#i-raincube"/></svg></div>
                            <ul>
                                <li>
                                    <div class="node"><b class="exp"></b><input type="checkbox" class="part" aria-label="Skupina"></div>
                                    <ul class="rows-7"><li><div class="node"><b class="exp"></b></div></li></ul>
                                    <ul><li><div class="node"><b class="exp"></b></div></li></ul>
                                </li>
                            </ul>
                        </li>
                    </ul>
                    <div class="vscroll"><svg viewBox="0 0 16 17"><path d="M5 10l3-3 3 3" fill="none" stroke="#555" stroke-width="2"/></svg><span></span></div>
                </div>
                <div class="hscroll"><svg viewBox="0 0 16 16"><path d="M11 4L7 8l4 4" fill="none" stroke="#333" stroke-width="2"/></svg><span></span></div>
                <div class="nav-tabs">
                    <button><svg><use href="#i-datatab"/></svg>Data</button>
                    <button><svg><use href="#i-proptab"/></svg>Zobr...</button>
                    <button><svg><use href="#i-micro"/></svg>Pohl...</button>
                    <button class="sel"><svg><use href="#i-rainbow"/></svg>Výsle...</button>
                </div>
            </aside>

            <!-- Model view -->
            <section class="view">
                <p class="view-title">Globální deformace u [mm]<br>KZ1 : 1.35*ZS1 + 1.5*ZS2</p>
                <svg class="model" viewBox="0 12 930 900">
                    <g stroke="#8a4a14" stroke-width="2">
                        <path d="M255 805l20-35 120 10 80 25-30 32z" fill="#a0622c"/>
                        <path d="M480 845l25-45 200 35-14 20 4 5-25 20z" fill="#a0622c"/>
                        <path d="M330 810l60-30 20 50M420 825l50-30M540 850l30-40 30 50M620 865l20-35 40 30" fill="#bd7a40"/>
                    </g>
                    <g fill="#c0600c" stroke="#6c3404" stroke-width="2"><circle cx="485" cy="792" r="18"/><circle cx="526" cy="806" r="16"/><circle cx="588" cy="820" r="16"/><circle cx="651" cy="830" r="18"/></g>
                    <path d="M200 440l190-60 240 180 90 15-38 220-28 20-170-40-70 10-70-4-90-32z" fill="#0000a0"/>
                    <path d="M715 590l-35 200-28 22-24-6M695 595l-35 200" fill="none" stroke="#b0b0b0" stroke-width="4"/>
                    <path d="M716 590l-35 204-28 18-180-36" fill="none" stroke="#111" stroke-width="2" stroke-dasharray="14 6"/>
                    <!-- inner surface -->
                    <path d="M65 412q20-60 110-97h150l60 20 20 77z" fill="#cfcf00"/>
                    <path d="M120 412l110-75 100-20 50 10-110 85z" fill="#ff0"/>
                    <path d="M190 412l135-92 40 12-120 80z" fill="#00f000"/>
                    <path d="M330 325l40 12-170 110v-30z" fill="#00e68c"/>
                    <path d="M365 330l20 20-190 120v-24z" fill="#00f0ff"/>
                    <path d="M384 348l8 20-200 120v-24z" fill="#0096ff"/>
                    <path d="M392 366l16 26-200 110v-24z" fill="#0000ff"/>
                    <path d="M200 500l208-112q70 115 219 172l-5 60-40 60-120 0-130-60-132-80z" fill="#0000a0"/>
                    <!-- outer shell, from the lower edge up -->
                    <path d="M585 675l42-130 288-220q-4 100-115 200l-70 48-130 92z" fill="#0000a0"/>
                    <path d="M592 662l38-150 284-180q-12 70-56 130l-120 98z" fill="#0000ff"/>
                    <path d="M598 655l32-150 284-180q-12 66-46 118l-130 102z" fill="#00a0ff"/>
                    <path d="M604 645l26-150 286-180q-9 64-38 110z" fill="#00f0ff"/>
                    <path d="M610 635l22-150 284-170q-8 60-30 97z" fill="#00e68c"/>
                    <path d="M615 625l18-150 283-170q-4 60-26 102z" fill="#0f0"/>
                    <path d="M622 604l6-130 288-170q2 40-12 80z" fill="#ff0"/>
                    <path d="M627 562q0-50-22-92l285-220q30 48 26 100z" fill="#cfcf00"/>
                    <path d="M605 470q-14-24-30-38l287-219q18 17 28 37z" fill="#ff0"/>
                    <path d="M575 432q-28-28-58-46l285-223q40 22 60 50z" fill="#0f0"/>
                    <path d="M517 386l-34-18 282-222 40 17z" fill="#ff0"/>
                    <path d="M483 368l-21-10 283-222 22 10z" fill="#cfcf00"/>
                    <path d="M462 358l-22-10 282-221 24 9z" fill="#ffa500"/>
                    <path d="M440 348l-26-10 276-220 33 9z" fill="#f00"/>
                    <path d="M414 338q-80-20-142-22l282-221q70 2 136 23z" fill="#b80000"/>
                    <path d="M256 316l276-221h26L274 317z" fill="#f00"/>
                    <path d="M240 315l278-220h16L258 316z" fill="#ffa500"/>
                    <path d="M65 412q20-55 110-93l50-4h17L520 95q-50 0-90 20L150 330z" fill="#cfcf00"/>
                    <path d="M180 318L464 98h34L215 316z" fill="#ff0"/>
                    <path d="M150 322L474 98q-40 2-64 20L240 258 140 330z" fill="#0f0"/>
                    <path d="M388 336q80 15 140 56t80 84 19 84q-60-10-120-50T400 390z" fill="#fff"/>
                    <!-- members and guide lines -->
                    <g fill="none" stroke="#00d820" stroke-width="3">
                        <path d="M85 410l35-45 25-40 90-60q100-5 200 45t140 165q35 100-10 205-50 100-140 105-90 5-170-30"/>
                        <path d="M440 105q50-55 145-62l50 4M720 95q70 40 115 100M862 460l-60 65M388 336q30 70 80 130t155 94"/>
                    </g>
                    <g fill="none" stroke="#111" stroke-width="3">
                        <path d="M345 267L635 45M265 240q130-105 250-100 120 12 200 140M265 240q90-70 150-72 170 0 250 140M225 315q-12 50-5 97M262 315q-10 70 15 160M627 565L345 785"/>
                    </g>
                    <g fill="none" stroke="#a0a0a0" stroke-width="4">
                        <path d="M390 270L590 130M390 270l140 100M520 150q110 15 190 140M500 180q110 30 172 145M735 75l100 125M585 45l-145 60M640 540L400 775" stroke-dasharray="26 12"/>
                        <path d="M262 530q60 100 170 140 90 35 180 0 60-30 105-80M255 510q90 175 320 178M275 475q50 110 150 160 80 40 165 35M262 545l35 30M262 500l25-25" stroke-width="6"/>
                        <path d="M270 520q80 150 240 160" stroke-width="5"/>
                        <path d="M385 335q60 140 240 225" stroke-dasharray="18 10"/>
                    </g>
                    <path d="M516 42h24v26h-24zM706 80h24v24h-24zM225 265h26v26h-26zM90 380h26v26H90zM416 300h26v26h-26zM380 358h24v24h-24zM552 465h26v26h-26zM518 520h20v14h-20zM552 662h26v26h-26zM416 778h26v26h-26z" fill="#0fe60f"/>
                    <g fill="#800080"><circle cx="268" cy="496" r="7"/><circle cx="284" cy="484" r="6"/><circle cx="362" cy="605" r="7"/><circle cx="378" cy="592" r="6"/><circle cx="396" cy="578" r="7"/><circle cx="598" cy="632" r="7"/><circle cx="612" cy="618" r="6"/><circle cx="582" cy="644" r="6"/><circle cx="700" cy="592" r="5"/><circle cx="720" cy="578" r="5"/></g>
                    <path d="M633 45v60" stroke="#8c8c30" stroke-width="4" stroke-dasharray="3 4"/>
                    <path d="M630 108l22-14h67V41h-78v53" fill="#fff" stroke="#555" stroke-width="4"/>
                    <path d="M330 748l22-9h60v-52h-74v52z" fill="#fff" stroke="#111" stroke-width="4"/>
                    <text x="648" y="80" class="tag blue">1.6</text>
                    <text x="343" y="724" class="tag">0.0</text>
                    <text x="620" y="146" class="mark">1.6</text>
                </svg>
                <p class="view-status">Max u: 1.6, Min u: 0.0 mm</p>
            </section>

            <!-- Factor panel -->
            <aside class="panel">
                <div class="pane-head">
                    <span>Panel</span>
                    <svg><use href="#i-pin"/></svg>
                    <svg><use href="#i-x"/></svg>
                </div>
                <div class="factors">
                    <h2>Faktory zobrazení</h2>
                    <div class="factor">
                        <label for="f1">Deformace:</label>
                        <span class="spin"><input type="text" id="f1" value="110"><i></i></span>
                    </div>
                    <div class="factor">
                        <label for="f2">Průběhy - pruty:</label>
                        <span class="spin off"><input type="text" id="f2" disabled><i></i></span>
                    </div>
                    <div class="factor">
                        <label for="f3">Průběhy - plochy:</label>
                        <span class="spin off"><input type="text" id="f3" disabled><i></i></span>
                    </div>
                    <div class="factor">
                        <label for="f4">Průběhy - řezy:</label>
                        <span class="spin off"><input type="text" id="f4" disabled><i></i></span>
                    </div>
                    <div class="factor">
                        <label for="f5">Reakce:</label>
                        <span class="spin off"><input type="text" id="f5" disabled><i></i></span>
                    </div>
                    <div class="factor">
                        <label for="f6">Trajektorie:</label>
                        <span class="spin off"><input type="text" id="f6" disabled><i></i></span>
                    </div>
                    <div class="factor">
                        <label class="check"><input type="checkbox" disabled><span>Přírůstky:</span></label>
                        <span class="inc"><select disabled aria-label="Přírůstky"></select><i class="arrows"></i></span>
                    </div>
                    <div class="panel-btns">
                        <button class="icon-btn" aria-label="Upravit"><svg><use href="#i-edit"/></svg></button>
                        <button class="icon-btn" aria-label="Standard"><svg><use href="#i-std"/></svg></button>
                        <button class="icon-btn" aria-label="Odemknout"><svg><use href="#i-lock"/></svg></button>
                    </div>
                </div>
                <div class="panel-tabs">
                    <button aria-label="Barevná škála"><svg><use href="#i-legend"/></svg></button>
                    <button class="sel" aria-label="Faktory"><svg><use href="#i-scale"/></svg></button>
                    <button aria-label="Filtr"><svg><use href="#i-microd"/></svg></button>
                </div>
            </aside>
        </main>

        <footer class="statusbar">
            <span class="ready">Hotovo</span>
            <span class="cell down">UCHOP</span>
            <span class="cell">RASTR</span>
            <span class="cell down">KARTEZ</span>
            <span class="cell">OUCHOP</span>
            <span class="cell down">VLINIE</span>
            <span class="cell down">DXF</span>
            <span class="fill"></span>
            <span class="seg"></span>
            <span class="seg"></span>
            <svg class="grip" viewBox="0 0 12 12"><path d="M9 3h2v2H9zM6 6h2v2H6zM9 6h2v2H9zM3 9h2v2H3zM6 9h2v2H6zM9 9h2v2H9z" fill="#7a808c"/></svg>
        </footer>
    </div>

    <!-- Calculation parameters -->
    <div class="dialog" role="dialog" aria-labelledby="dlg-title">
        <div class="dlg-title">
            <h1 id="dlg-title">Parametry výpočtu</h1>
            <button class="dlg-close" aria-label="Zavřít"><svg><use href="#i-x"/></svg></button>
        </div>

        <div class="dlg-tabs">
            <button>Zatěžovací stavy</button>
            <button>Kombinace zatížení</button>
            <button>Kombinace výsledků</button>
            <button class="sel marked">Globální parametry výpočtu</button>
            <button>Výpočtový diagram</button>
        </div>

        <div class="page">
            <fieldset class="box">
                <legend>Nastavení</legend>
                <div class="body">
                    <div class="row"><label for="s1">Maximální počet iterací:</label><span class="spin"><input type="text" id="s1" value="100"><i></i></span></div>
                    <p class="mt12">Počet přírůstků zatížení pro</p>
                    <div class="row mt2"><label for="s2">- zatěžovací stavy:</label><span class="spin"><input type="text" id="s2" value="5"><i></i></span></div>
                    <div class="row mt2"><label for="s3">- kombinace zatížení:</label><span class="spin"><input type="text" id="s3" value="5"><i></i></span></div>
                    <div class="row mid mt10"><label for="s4">Maximální počet přírůstků zatížení<br>pro postupné zvyšování zatížení:</label><span class="spin"><input type="text" id="s4" value="1000"><i></i></span></div>
                    <p class="mt10">Počet dělení prutu pro</p>
                    <div class="row mt2"><label for="s5">- průběh výsledků:</label><span class="spin"><input type="text" id="s5" value="10"><i></i></span></div>
                    <div class="row mt2"><label for="s6" class="dash">- speciální typy prutů (lano, prutů s<br>pružným podložím, s náběhy,<br>nelinearitou):</label><span class="spin"><input type="text" id="s6" value="10"><i></i></span></div>
                    <div class="row mt2"><label for="s7">- určení maxim/minim:</label><span class="spin"><input type="text" id="s7" value="10"><i></i></span></div>
                    <div class="row mt16"><label for="s8">Rozdělení sítě KP pro grafické<br>výsledky:</label><span class="spin"><input type="text" id="s8" value="0"><i></i></span></div>
                    <div class="row mt14"><label for="s9">Procentuální počet iterací metody<br>Newton-Raphsonovy v kombinaci s<br>Picardovou:</label><span class="spin"><input type="text" id="s9" value="5"><i></i></span><span class="unit">[%]</span></div>
                </div>
            </fieldset>

            <fieldset class="box">
                <legend>Možnosti</legend>
                <div class="body">
                    <label class="check mt2"><input type="checkbox" checked><span>Aktivovat smykovou tuhost prutů<br>(průřezové plochy A<small> y</small>, A <small>z</small>)</span></label>
                    <label class="check mt8"><input type="checkbox" checked><span>Aktivovat dělení prutů pro analýzu velkých deformací<br>nebo postkritickou analýzu, poč. přetvoření od jiného<br>ZS / jiné KZ</span></label>
                    <label class="check mt4"><input type="checkbox" checked><span>Aktivovat zadané změny tuhosti (materiály, průřezy,<br>pruty, zatěžovací stavy a kombinace zatížení)</span></label>
                    <label class="check mt4"><input type="checkbox" checked><span>Aktivovat další možnosti<br>(zatěžovací stavy a kombinace zatížení)</span></label>
                    <label class="check mt26"><input type="checkbox" checked><span>Zkontrolovat kritické síly prutů</span></label>
                    <label class="check mt6"><input type="checkbox" checked><span>Spočítat maximální hodnoty přetvoření</span></label>
                    <label class="check mt6"><input type="checkbox"><span>Nesymetrický přímý řešič, pokud vyžadováno<br>nelineárním modelem</span></label>
                    <div class="choice mt6">
                        <span>Metoda pro<br>systém rovnic:</span>
                        <div>
                            <label class="check"><input type="radio" name="met" checked><span>Přímá</span></label>
                            <label class="check"><input type="radio" name="met"><span>Iterační</span></label>
                        </div>
                    </div>
                    <div class="choice mt4">
                        <span>Ohybová teorie desek:</span>
                        <div>
                            <label class="check"><input type="radio" name="ohyb" checked><span>Mindlinova</span></label>
                            <label class="check"><input type="radio" name="ohyb"><span>Kirchhoffova</span></label>
                        </div>
                    </div>
                    <div class="choice mt4">
                        <span>Verze řešiče:</span>
                        <div>
                            <label class="check"><input type="radio" name="bit"><span>32-bit</span></label>
                            <label class="check"><input type="radio" name="bit" checked><span>64-bit</span></label>
                        </div>
                    </div>
                </div>
            </fieldset>

            <fieldset class="box">
                <legend>Přesnost a tolerance</legend>
                <div class="body">
                    <label class="check mt2"><input type="checkbox"><span>Změnit standardní nastavení</span></label>
                    <div class="tol mt10">
                        <label for="p1">Tolerance kritérií<br>konvergence u nelineárního<br>výpočtu:</label>
                        <div class="field"><span class="dark mt4">[0.01 ... 100]</span><span class="spin off wide mt4"><input type="text" id="p1" disabled><i></i></span></div>
                    </div>
                    <div class="tol mt4">
                        <label for="p2">Tolerance pro detekci<br>nestability:</label>
                        <div class="field"><span class="spin off wide mt10"><input type="text" id="p2" disabled><i></i></span></div>
                    </div>
                    <div class="tol mt4">
                        <label for="p3">Relativní nastavení časového<br>kroku pro dynamickou<br>relaxaci:</label>
                        <div class="field"><span class="spin off wide mt8"><input type="text" id="p3" disabled><i></i></span><span class="mt6">(Nižší faktor -&gt; přesnější)</span></div>
                    </div>
                    <div class="tol mt16">
                        <label for="p4" class="mt10">Robustnost iterativního<br>výpočtu:</label>
                        <div class="field"><span>[1.00 ... 100]</span><span class="spin off wide mt4"><input type="text" id="p4" disabled><i></i></span></div>
                    </div>
                    <div class="cable mt12"><span>Nastavení pro lana a membrány...</span><button class="icon-btn" disabled aria-label="Nastavení pro lana a membrány"><svg><use href="#i-cable"/></svg></button></div>
                    <label class="check mt18"><input type="checkbox"><span>Stabilizační tuhost přidružená k tvarům s nulovou energií pro</span></label>
                    <div class="tol mt4">
                        <label for="p5" class="mt16">- skořepiny:</label>
                        <div class="field"><span>[0.01 ... 100]</span><span class="spin off wide mt2"><input type="text" id="p5" disabled><i></i></span></div>
                    </div>
                    <div class="tol">
                        <label for="p6" class="mt2">- tělesa:</label>
                        <div class="field"><span class="spin off wide mt2"><input type="text" id="p6" disabled><i></i></span><span class="mt6">(menší faktor -&gt; menší stabilizace)</span></div>
                    </div>
                </div>
            </fieldset>

            <fieldset class="box marked">
                <legend>Nelinearity</legend>
                <div class="body">
                    <p>Aktivovat:</p>
                    <label class="check mt6"><input type="checkbox" disabled><span>Podpory a pružná podloží</span></label>
                    <label class="check mt8"><input type="checkbox" disabled><span>Pruty z důvodu typu prutu</span></label>
                    <label class="check mt8"><input type="checkbox" disabled><span>Klouby na koncích prutu, uvolnění</span></label>
                    <label class="check mt8"><input type="checkbox" disabled><span>Nelinearity prutů</span></label>
                    <label class="check mt8"><input type="checkbox" checked><span>Tělesa typu 'Kontakt'</span></label>
                    <label class="check mt8"><input type="checkbox" checked><span>Materiály s nelineárním modelem</span></label>
                    <label class="check indent mt6"><input type="checkbox"><span>Počet přírůstků pro Newton-Raphsonovu metodu<br>určit automaticky</span></label>
                    <hr>
                    <label class="check mt8"><input type="checkbox" disabled><span>Materiálový model izotropní termoelastický</span></label>
                </div>
            </fieldset>

            <fieldset class="box">
                <legend>Reaktivace vypadlých prutů</legend>
                <div class="body">
                    <label class="check"><input type="checkbox" checked disabled><span>Zkontrolovat deformace vypadávajících prutů a<br>popř. je reaktivovat</span></label>
                    <div class="row react mt4"><label for="r1">Maximální počet reaktivací:</label><span class="spin off"><input type="text" id="r1" value="3" disabled><i></i></span></div>
                    <label class="check mt20"><input type="checkbox" disabled><span>Zvláštní úpravy nastavení</span></label>
                    <label class="check indent mt8"><input type="radio" name="zvl" disabled><span>Vypadávající pruty odstraňovat jednotlivě<br>v po sobě jdoucích iteracích</span></label>
                    <label class="check indent mt14"><input type="radio" name="zvl" checked disabled><span>Vypadávajícím prutům přiřadit menší tuhost</span></label>
                    <div class="row react deep mt12"><label for="r2">Redukční součinitel tuhosti:</label><span class="spin off wide"><input type="text" id="r2" value="1000" disabled><i></i></span></div>
                </div>
            </fieldset>

            <div class="stack">
                <fieldset class="box">
                    <legend>Vnitřní tlak v trubce</legend>
                    <div class="body">
                        <label class="check"><input type="checkbox"><span>Posuny od zatížení na prut typu 'Vnitřní tlak v trubce'<br>(Bourdonův efekt)</span></label>
                    </div>
                </fieldset>
                <div class="tools">
                    <button class="icon-btn" aria-label="Načíst standard"><svg><use href="#i-std"/></svg></button>
                    <button class="icon-btn" aria-label="Uložit jako standard"><svg><use href="#i-std"/></svg></button>
                </div>
            </div>
        </div>

        <div class="dlg-foot">
            <button class="icon-btn" aria-label="Nápověda"><svg><use href="#i-help"/></svg></button>
            <button class="icon-btn" aria-label="Načíst"><svg><use href="#i-open"/></svg></button>
            <button class="icon-btn" aria-label="Uložit"><svg><use href="#i-savewin"/></svg></button>
            <button class="btn ok">OK</button>
            <button class="btn">Storno</button>
        </div>
        <svg class="dlg-grip" viewBox="0 0 12 12"><path d="M1 12L12 1M5 12l7-7M9 12l3-3" stroke="#888"/></svg>
    </div>

</body>

</html>
```
FILE: styles.css
```css
* {
    box-sizing: border-box;
}

body {
    margin: 0;
    font-family: 'Liberation Sans', sans-serif;
    font-size: 11px;
    line-height: 13px;
    color: #000;
    background: #d0d4dd;
}

button,
input,
select {
    font: inherit;
    margin: 0;
}

button {
    padding: 0;
    border: 0;
    background: none;
}

p,
h1,
h2,
ul,
fieldset {
    margin: 0;
    padding: 0;
    border: 0;
    font-size: inherit;
    font-weight: normal;
}

.sprite {
    position: absolute;
}

.app {
    display: flex;
    flex-direction: column;
    height: 100vh;
    overflow: hidden;
    border-right: 1px solid #8e929c;
}

/* red frames */
.marked {
    position: relative;
}

.marked::after {
    content: '';
    position: absolute;
    inset: -7px -8px -8px -11px;
    border: 5px solid #ed1c24;
    z-index: 3;
}

/* title bar */
.titlebar {
    display: flex;
    align-items: center;
    flex: none;
    height: 31px;
    padding-left: 8px;
    background: linear-gradient(90deg, #8c8c8c 26%, #e4e4e4 26% 33%, #0078d7 33% 36%, #e4e4e4 36% 43%, #8c8c8c 43%) top / 100% 1px no-repeat #fff;
}

.icon {
    width: 16px;
    height: 16px;
}

.app-title {
    flex: 1;
    padding-left: 6px;
    font-family: 'Noto Sans', sans-serif;
    font-size: 11px;
    color: #8a8a8a;
}

.win-btn {
    width: 46px;
    height: 30px;
}

.win-btn svg {
    width: 10px;
    height: 10px;
}

/* menu */
.menubar {
    display: flex;
    align-items: center;
    gap: 15px;
    flex: none;
    height: 24px;
    font-family: 'Open Sans', sans-serif;
    background: #d0d4dd;
}

.menubar a {
    color: #4a4e58;
    text-decoration: none;
}

.menubar .handle {
    margin-right: -15px;
}

.bridge {
    width: 16px;
    height: 12px;
    margin-right: -5px;
}

.mdi {
    display: flex;
    gap: 6px;
    margin-left: auto;
    padding-right: 4px;
}

.mdi svg {
    width: 10px;
    height: 10px;
}

.handle {
    flex: none;
    width: 10px;
    height: 15px;
    background: repeating-linear-gradient(#a9aebb 0 2px, #f4f6fa 2px 3px, transparent 3px 4px) 4px 0 / 2px 100% no-repeat;
}

/* toolbars */
.toolbar {
    display: flex;
    flex: none;
    height: 26px;
}

.group {
    display: flex;
    align-items: center;
    padding-right: 2px;
    border-bottom: 1px solid #a2a8b4;
    border-radius: 0 4px 4px 0;
    background: linear-gradient(#f0f3f8, #e4e8ef 45%, #d3d8e1 80%, #cbd0da);
}

.group button {
    display: flex;
    align-items: center;
    justify-content: center;
    width: 22px;
    height: 22px;
}

.group button svg {
    width: 16px;
    height: 16px;
}

.group .on {
    border: 1px solid #a58a5c;
    background: linear-gradient(#f9d9a4, #fbb854 50%, #fee08a);
}

.group .on svg {
    flex: none;
}

.group .dim {
    opacity: .5;
}

.group .drop {
    width: 13px;
}

.drop::after {
    content: '';
    border: 3px solid transparent;
    border-top-color: #777c86;
    border-bottom: 0;
}

.sep {
    width: 1px;
    height: 14px;
    margin: 0 4px 0 3px;
    background: #a8adb8;
}

.combo {
    width: 216px;
    margin: 0 2px;
}

.combo select {
    width: 100%;
    height: 18px;
    padding: 0 0 0 3px;
    border: 0;
    border-radius: 0;
    appearance: none;
    color: #000;
    background: linear-gradient(#777, #777) right 5px top 7px / 5px 1px no-repeat, linear-gradient(#777, #777) right 6px top 8px / 3px 1px no-repeat, linear-gradient(#777, #777) right 7px top 9px / 1px 1px no-repeat, linear-gradient(#dfe2e8, #dfe2e8) right / 14px 100% no-repeat #fff;
}

/* workspace */
.workspace {
    display: flex;
    flex: 1;
    min-height: 0;
    padding-top: 1px;
}

.pane-head {
    display: flex;
    align-items: center;
    gap: 7px;
    flex: none;
    height: 20px;
    padding: 0 4px 0 3px;
    font-family: 'Open Sans', sans-serif;
    color: #3c4048;
    background: #b8bfca;
}

.pane-head span {
    flex: 1;
}

.pane-head svg {
    width: 10px;
    height: 10px;
    color: #666c78;
}

.navigator {
    display: flex;
    flex-direction: column;
    flex: none;
    width: 237px;
    border-left: 1px solid #9aa0ac;
}

.tree-box {
    display: flex;
    flex: 1;
    min-height: 0;
    overflow: hidden;
    padding: 2px 3px 0 1px;
    border-right: 1px solid #9aa0ac;
    background: #fdfdf3;
}

.tree {
    flex: 1;
    font-family: 'Noto Sans', sans-serif;
    background: repeating-linear-gradient(#999 0 1px, transparent 1px 2px) 12px 9px / 1px 100% no-repeat;
}

.tree ul {
    margin-left: 20px;
    background: repeating-linear-gradient(#999 0 1px, transparent 1px 2px) 12px 0 / 1px calc(100% - 9px) no-repeat;
}

.tree li {
    list-style: none;
}

.rows-11 {
    height: 198px;
}

.rows-3 {
    height: 54px;
}

.rows-4 {
    height: 72px;
}

.rows-7 {
    height: 126px;
}

.node {
    display: flex;
    align-items: center;
    height: 18px;
    padding-left: 8px;
}

.node svg {
    width: 16px;
    height: 14px;
    margin: 0 5px 0 2px;
}

.node small {
    font-size: 10px;
}

.exp {
    position: relative;
    width: 9px;
    height: 9px;
    margin-right: 9px;
    border: 1px solid #8c8c8c;
    background: linear-gradient(#24408e, #24408e) center / 5px 1px no-repeat #fff;
}

.exp.plus {
    background: linear-gradient(#24408e, #24408e) center / 5px 1px no-repeat, linear-gradient(#24408e, #24408e) center / 1px 5px no-repeat #fff;
}

.exp::after {
    content: '';
    position: absolute;
    left: 9px;
    top: 3px;
    width: 6px;
    border-top: 1px dotted #888;
}

.leaf::before {
    content: '';
    width: 11px;
    margin: 0 3px 0 4px;
    border-top: 1px dotted #888;
}

.tree input {
    flex: none;
    width: 13px;
    height: 13px;
    appearance: none;
    border: 1px solid #333;
    background: linear-gradient(135deg, #d4d8de, #fff);
}

.tree input[type="radio"] {
    border-radius: 50%;
}

.tree input[type="radio"]:checked {
    background: radial-gradient(circle, #111 2px, #fff 3px);
}

.tree input[type="checkbox"]:checked {
    background: linear-gradient(#fff, #ddd);
}

.tree input[type="checkbox"]:checked::before {
    content: '';
    display: block;
    width: 7px;
    height: 4px;
    margin: 2px;
    border: solid #111;
    border-width: 0 0 2px 2px;
    transform: rotate(-45deg);
}

.tree .part {
    box-shadow: inset 0 0 0 2px #fff;
    background: #999;
}

.vscroll {
    display: flex;
    flex-direction: column;
    flex: none;
    width: 16px;
    background: #f0f0f0;
}

.vscroll span {
    flex: 1;
    background: #cdcdcd;
}

.hscroll {
    display: flex;
    flex: none;
    height: 17px;
    border-right: 1px solid #9aa0ac;
    border-bottom: 2px solid #868c98;
    background: #f0f0f0;
}

.hscroll svg {
    width: 19px;
}

.hscroll span {
    width: 50%;
    background: #cdcdcd;
}

.nav-tabs {
    display: flex;
    justify-content: space-between;
    flex: none;
    height: 24px;
    padding: 0 6px 2px 5px;
    font-family: 'Open Sans', sans-serif;
    color: #3c4048;
}

.nav-tabs button {
    display: flex;
    align-items: center;
    gap: 2px;
    color: inherit;
}

.nav-tabs svg {
    width: 16px;
    height: 16px;
}

.nav-tabs .sel,
.panel-tabs .sel {
    border: 1px solid #b6dcdc;
    border-top: 0;
    border-radius: 0 0 4px 4px;
    background: #f4f8f8;
}

/* model view */
.view {
    display: flex;
    flex-direction: column;
    flex: 1;
    min-width: 0;
    margin-left: 5px;
    border: 1px solid #6e6e6e;
    border-width: 1px 0 1px 1px;
    background: #fff;
}

.view-title {
    height: 0;
    padding: 5px 4px;
    line-height: 14px;
    overflow: visible;
}

.model {
    width: 310px;
    height: 300px;
    margin-top: -10px;
    align-self: flex-end;
}

.tag {
    font: bold 30px 'Liberation Mono', monospace;
    fill: #666;
}

.tag.blue {
    font-weight: normal;
    font-size: 34px;
    fill: #1818a8;
}

.mark {
    font: 26px 'Liberation Sans', sans-serif;
    fill: #8c7a14;
}

.view-status {
    margin-top: auto;
    padding: 0 4px 6px;
}

/* right panel */
.panel {
    display: flex;
    flex-direction: column;
    flex: none;
    width: 158px;
    margin-left: 5px;
}

.factors {
    flex: 1;
    padding: 6px 6px 0;
    border: 1px solid #9aa0ac;
    border-top: 0;
    background: #f0f0f0;
}

.factors h2 {
    margin: 0 -2px 4px;
}

.factor {
    display: flex;
    flex-direction: column;
    align-items: flex-start;
    gap: 4px;
    margin-bottom: 9px;
    padding: 4px 1px;
    border: solid #a8a8ec;
    border-width: 0 1px 1px 0;
    background: #f7f7f7;
}

.inc {
    display: flex;
}

.inc select {
    width: 92px;
    height: 22px;
    margin: 0 2px -2px 0;
    appearance: none;
    border: 1px solid #c8c8c8;
    border-radius: 0;
    background:
        conic-gradient(from -45deg at 50% 100%, #aaa 90deg, transparent 0) right 5px center / 8px 4px no-repeat,
        linear-gradient(#fff, #fff) right / 18px 100% no-repeat,
        #efefef;
}

.panel-btns {
    display: flex;
    gap: 5px;
    padding: 12px 3px 0 0;
}

.panel-btns :last-child {
    margin-left: auto;
}

.panel-tabs {
    display: flex;
    gap: 8px;
    flex: none;
    height: 24px;
    padding: 0 2px 2px;
}

.panel-tabs button {
    width: 22px;
}

.panel-tabs svg,
.icon-btn svg {
    display: block;
    width: 16px;
    height: 16px;
    margin: auto;
}

/* status bar */
.statusbar {
    display: flex;
    align-items: center;
    gap: 2px;
    flex: none;
    height: 19px;
    color: #2c3038;
    border-top: 1px solid #8c919b;
    background: linear-gradient(#d6d9de, #a6acb6 50%, #b6bac2);
}

.ready {
    width: 44%;
    padding-left: 4px;
}

.cell {
    height: 16px;
    padding: 1px 3px 0 2px;
    border-right: 1px solid #f0f0f0;
    border-top: 1px solid #f0f0f0;
}

.cell.down {
    border-left: 1px solid #111;
    border-top: 1px solid #111;
}

.fill {
    flex: 1;
}

.seg {
    width: 74px;
    height: 16px;
    border-left: 1px solid #8c919b;
}

.grip {
    width: 12px;
    height: 12px;
    align-self: flex-end;
}

/* dialog */
.dialog {
    position: absolute;
    left: 54px;
    top: 242px;
    width: 973px;
    border: 1px solid #6b6b6b;
    background: #f0f0f0;
    box-shadow: 0 4px 18px rgba(0, 0, 0, .45);
}

.dlg-title {
    display: flex;
    align-items: center;
    justify-content: space-between;
    height: 30px;
    padding: 0 9px 0 8px;
    font-family: 'Open Sans', sans-serif;
    font-size: 12px;
    background: #fff;
}

.dlg-close svg {
    display: block;
    width: 12px;
    height: 12px;
}

.dlg-tabs {
    display: flex;
    align-items: flex-end;
    height: 27px;
    padding-left: 8px;
}

.dlg-tabs button {
    height: 18px;
    padding: 0 4px;
    border: 1px solid #d9d9d9;
    border-bottom: 0;
}

.dlg-tabs button + button {
    border-left: 0;
}

.dlg-tabs .sel {
    height: 21px;
    margin-left: -7px;
    padding-left: 8px;
    background: #fff;
}

.dlg-tabs .marked::after {
    inset: -4px -6px -4px -10px;
}

.page {
    display: grid;
    grid-template-columns: 292fr 285fr 348fr;
    gap: 10px 8px;
    margin: 0 8px 0 6px;
    padding: 10px 7px 11px 8px;
    border: 1px solid #dcdcdc;
    background: #fff;
}

.box {
    display: flex;
    flex-direction: column;
    min-width: 0;
}

.box legend {
    float: left;
    width: 100%;
    height: 16px;
    padding: 1px 2px;
    color: #1a4a7e;
    background: #dce6f4;
    clip-path: polygon(0 0, calc(100% - 10px) 0, 100% 10px, 100% 100%, 0 100%);
}

.body {
    flex: 1;
    padding: 4px 2px 10px;
    border: 1px solid #a8a8ec;
    border-width: 0 1px 1px 0;
    background: #f0f4f9;
}

.box.marked::after {
    inset: -11px 14px -11px -9px;
}

.row {
    display: flex;
    align-items: flex-end;
}

.row label {
    width: 211px;
    padding-bottom: 3px;
}

.row.mid {
    align-items: center;
}

.row.mid label {
    padding: 0;
}

.row .dash {
    padding-left: 7px;
    text-indent: -7px;
}

.unit {
    padding: 0 0 3px 4px;
    font-size: 12px;
}

.spin {
    display: flex;
    width: 53px;
    height: 20px;
    border: 1px solid #7a7a7a;
    border-right-color: #a8a8a8;
    background: #fff;
}

.factor .spin {
    width: 68px;
}

.spin.wide {
    width: 65px;
}

.spin input {
    flex: 1;
    min-width: 0;
    padding: 0 5px;
    border: 0;
    text-align: right;
    color: #000;
    background: none;
}

.spin i,
.arrows {
    width: 16px;
    border: 1px solid #b8b8b8;
    background:
        conic-gradient(from 135deg at 50% 0, #000 90deg, transparent 0) center top 3px / 6px 3px no-repeat,
        conic-gradient(from -45deg at 50% 100%, #000 90deg, transparent 0) center bottom 3px / 6px 3px no-repeat,
        linear-gradient(#b0b0b0, #b0b0b0) center / 100% 1px no-repeat,
        #f0f0f0;
}

.spin.off {
    border-color: #c6c6c6;
}

.spin.off input {
    color: #6d6d6d;
}

.spin.off i,
.arrows {
    opacity: .6;
}

.factor .spin.off input {
    background: #efefef;
}

.check {
    display: flex;
    gap: 2px;
    padding-left: 1px;
}

.check input {
    flex: none;
    width: 13px;
    height: 13px;
    appearance: none;
    border: 1px solid #333;
    background: #fff;
}

.check input[type="radio"] {
    border-radius: 50%;
}

.check input[type="checkbox"]:checked::before {
    content: '';
    display: block;
    width: 9px;
    height: 5px;
    margin: 1px;
    border: solid #444;
    border-width: 0 0 1px 1px;
    transform: rotate(-45deg);
}

.check input[type="radio"]:checked {
    background: radial-gradient(circle, #333 3px, #fff 4px);
}

.check input:disabled {
    border-color: #ccc;
}

.check input[type="radio"]:checked:disabled {
    background: radial-gradient(circle, #c4c4c4 3px, #fff 4px);
}

.check input:checked:disabled::before {
    border-color: #bbb;
}

.check input:disabled + span {
    color: #6d6d6d;
}

.check small {
    font-size: 10px;
}

.indent {
    padding-left: 16px;
}

.choice {
    display: flex;
}

.choice > span {
    width: 126px;
    padding-top: 4px;
}

.choice .check {
    height: 18px;
    align-items: center;
}

.tol {
    display: grid;
    grid-template-columns: 148px 1fr;
    padding-left: 17px;
    color: #a0a0a0;
    text-shadow: 1px 1px #fff;
}

.field {
    display: flex;
    flex-direction: column;
}

.dark {
    color: #000;
}

.cable {
    display: flex;
    align-items: center;
    justify-content: space-between;
    padding: 0 3px 0 17px;
    color: #a0a0a0;
    text-shadow: 1px 1px #fff;
}

.react label {
    width: 202px;
    padding-left: 16px;
    color: #a0a0a0;
    text-shadow: 1px 1px #fff;
}

.react.deep label {
    padding-left: 32px;
}

hr {
    width: 242px;
    height: 2px;
    margin: 14px 0 0 4px;
    border: 0;
    border-top: 1px solid #a0a0a0;
    background: #fff;
}

.stack {
    display: flex;
    flex-direction: column;
    gap: 8px;
}

.stack .box {
    flex: 1;
}

.tools {
    display: flex;
    justify-content: flex-end;
    gap: 5px;
    padding: 3px;
    border: 1px solid #a8a8ec;
    border-top-color: #dce6f4;
    border-left-color: #dce6f4;
    background: #f0f4f9;
}

.icon-btn {
    width: 25px;
    height: 21px;
    border: 1px solid #adadad;
    background: #e1e1e1;
}

.icon-btn:disabled {
    background: #ccc;
}

.dlg-foot {
    display: flex;
    gap: 5px;
    padding: 11px 7px 7px;
}

.dlg-foot .icon-btn:first-child {
    margin-right: 5px;
}

.btn {
    width: 73px;
    height: 21px;
    border: 1px solid #adadad;
    background: #e1e1e1;
}

.btn.ok {
    margin: 0 5px 0 auto;
    border: 2px solid #0078d7;
}

.dlg-grip {
    position: absolute;
    right: 0;
    bottom: 0;
    width: 12px;
    height: 12px;
}

.mt2 { margin-top: 2px; }
.mt4 { margin-top: 4px; }
.mt6 { margin-top: 6px; }
.mt8 { margin-top: 8px; }
.mt10 { margin-top: 10px; }
.mt12 { margin-top: 12px; }
.mt14 { margin-top: 14px; }
.mt16 { margin-top: 16px; }
.mt18 { margin-top: 18px; }
.mt20 { margin-top: 20px; }
.mt26 { margin-top: 26px; }
```
